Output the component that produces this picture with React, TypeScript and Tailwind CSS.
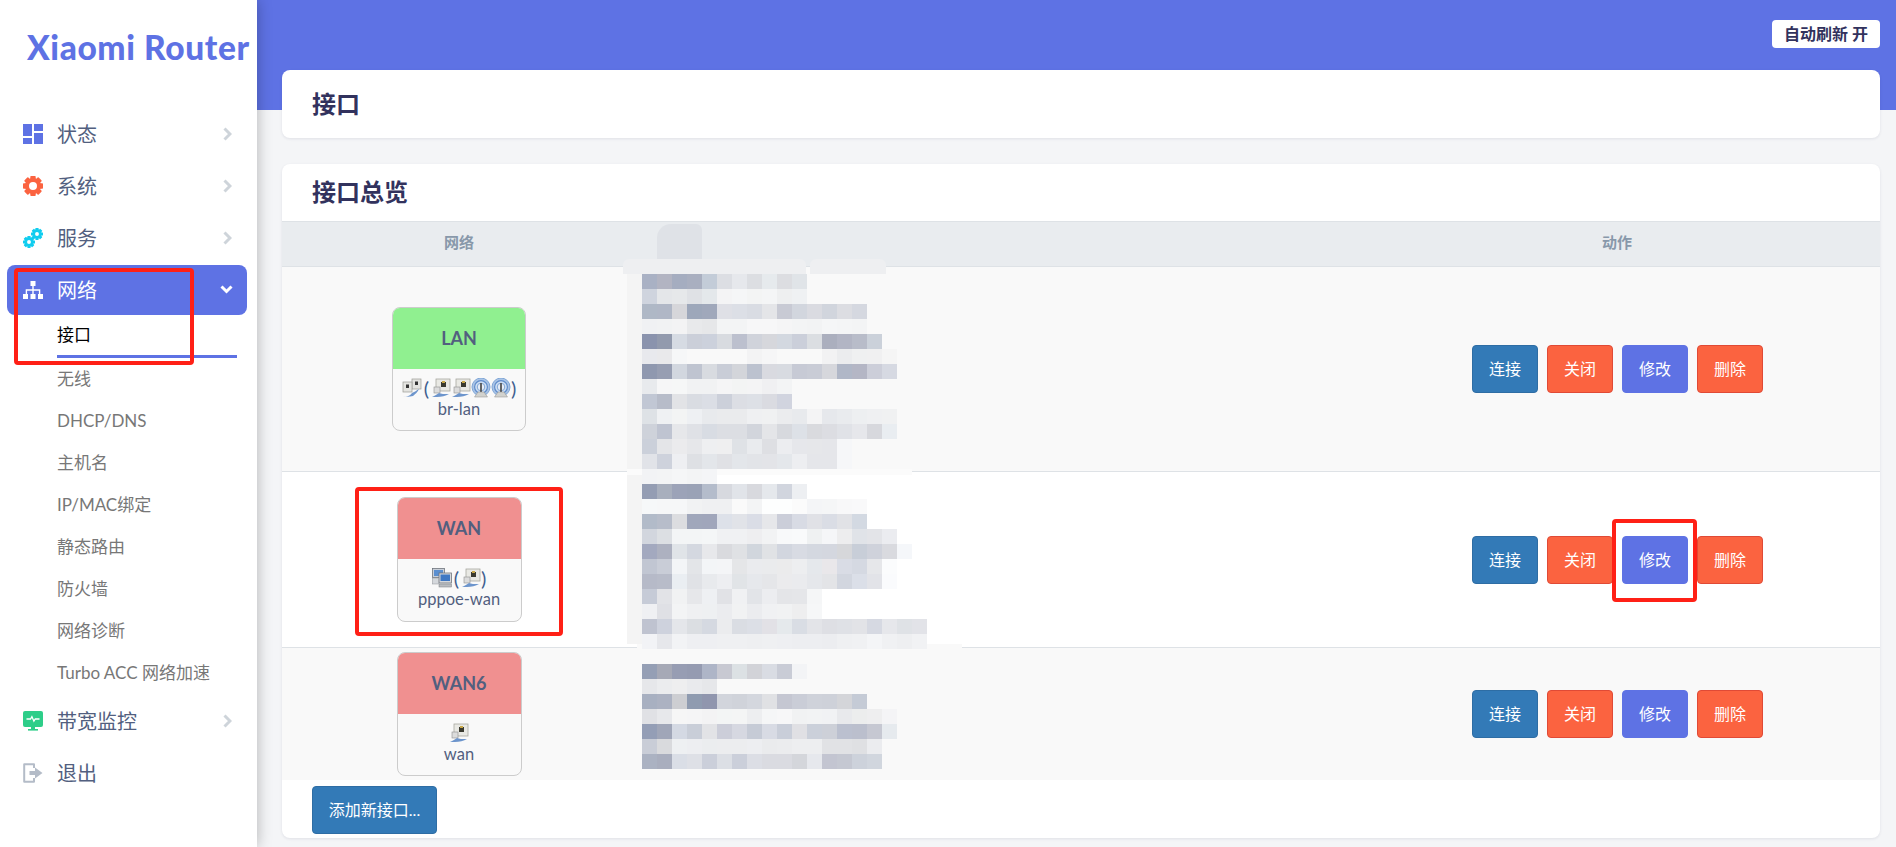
const FONT = "font-['Lato','Noto_Sans_CJK_SC',sans-serif]";

// pixelated block over the table, one row every 15px, from x=642 y=274
const MOSAIC: string[][] = [
  ['a9b1c4','b2b4c2','a5adc0','a9afc0','c3ccd8','dcdee3','e6e8ec','dcdee2','e6eaed','dcdde1','e0e4e8'],
  ['cfd4de','e4e6e9','e6e8ea','dfe1e5','e4e8eb','f4f4f5','f5f6f7','f3f4f4','f4f5f6','eeeff0','eff1f3'],
  ['afb8c6','b0b7c6','d6d6da','9da7ba','a0a8bb','dfe0e6','dcdfe6','d9dce3','e4e5e8','c8cad4','d2d6de','dadbe1','d1d5dd','dcdde2','d5d8e0'],
  ['f0f1f3','f1f2f3','f3f3f4','e8e9eb','e6e7e9','f3f4f5','f3f4f5','f7f7f8','f7f7f8','f5f5f6','f3f4f5','f2f3f4','f5f6f7','f4f5f6','f3f4f5'],
  ['8a93ad','929aad','d6dbe3','cbcfd9','ccd1dc','d8dbe0','bcc0ce','d0d3db','d6d7dc','d3d8e0','cbcfda','dbdee2','abafbe','b2b5c4','b8bcc9','cbd1da'],
  ['e8e9ed','e9e9eb','f6f7f8','f9f9f9','f9f9f9','f9f9f9','f9f9f9','f3f3f4','f6f6f7','f9f9f9','f9f9f9','f9f9f9','f2f2f3','ebecee','eff0f1','f0f0f1','f5f5f5'],
  ['8f98af','979eb2','d2d7df','bfc4d0','d8dbe0','c9cdd7','d3d5da','bcc2cf','d9dae0','d8dbe1','c7cad5','c9ccd6','d6d7dc','b0b7c7','b4b6c5','ccced9','d6d9e2'],
  ['e8eaed','f6f6f7','f6f7f7','f1f2f3','f1f2f3','f5f5f6','f3f4f4','f4f4f5','f0f0f2','f3f4f5'],
  ['c1c7d4','b7bcc9','e2e3e6','d9dce2','dbdee5','ccd0da','dcdee4','dde0e6','dadbe1','d1d4df'],
  ['dee2e6','eff1f3','f3f4f4','eef0f3','e8eaed','eaebed','eaebed','eff0f2','f0f1f2','ebecee','e8eaed','f4f4f5','e6e8ec','e9ebee','edeff1','eff0f2','f0f1f2'],
  ['ced2da','bfc4d1','e6e7ea','dfe1e6','d8dce3','dcdee3','dcdee3','d2d5dc','e4e5e8','d7d9de','dde1e7','d9dade','dcdde2','e0e2e7','e6e7eb','d7d8dd','e9edf1'],
  ['cbd0da','e4e5e8','ebebed','e6e7ea','eeeff1','efeff0','dfe2e6','e9ebee','dedfe3','ecedf0','e6e7eb','e6e7ea','e5e6ea','f6f7f9'],
  ['e1e3e8','ced2dc','eeeff2','dee0e4','e3e6ea','e0e1e5','e3e6ea','e2e4e8','e3e4e8','e4e7eb','edeef1','e5e6ea','e5e6ea','f6f7f9'],
  ['f2f3f5','f3f4f5','f5f6f7','f3f4f5','f4f5f7'],
  ['949db3','a8afbd','9ca3b8','9aa2b6','b4bccb','d7d9df','e1e4e9','d8d9de','e5e8ec','d1d5de','edeff2'],
  ['f6f8f9','f6f7f8','f6f7f8','f1f2f3','eff0f2','eff0f2','fafafa','f3f4f5','fdfefe','fdfefe','fbfbfb','f4f5f7','f5f6f7','f8f8f9','f9f9fa'],
  ['b2bbc9','b7bdca','dcdde0','a0a7bb','a0a6bb','dde1e9','e1e3e8','dadde6','e6e7ea','cbced9','d8dbe4','e0e1e6','dadde5','e1e2e6','d3d9e2'],
  ['d2d6de','dcdfe3','f3f5f6','f3f5f6','f4f6f7','f0f1f3','f0f1f3','eeeef0','f2f3f4','f8f9fa','f9fafb','eff1f2','f5f6f8','ededee','e0e3e8','e3e4e8','ebecf0'],
  ['a3a9bf','adb1c0','e0e4e8','d4d8e0','e7e8eb','d9dade','dfe1e4','d1d6dd','e0e2e5','d2d6df','d8dbe3','d4d8e0','d4d7df','d6d7da','c8ced8','cfd2db','d9dadf','f5f7fa'],
  ['c1c6d2','c9cdd7','f3f5f7','e3e5e8','f3f5f7','f4f5f7','e5e6e8','eaebee','eaebed','ebebec','edeef0','e5e8ec','e9e7ea','d9dce5','d5d9e2','e6e7ea','fbfcfd'],
  ['b6bac8','b8bcc9','eaeef2','e0e2e6','e8eaed','edeef1','e1e4e7','e6e8ec','e5e6e9','ebebed','eaebee','e5e7eb','e3e4e7','d2d6df','dbdfe8','e2e3e8','fafbfd'],
  ['c6cbd7','e2e3e7','f1f2f3','e6e7ea','eef0f3','e1e2e6','f0f1f3','e2e4e8','ecedf0','e4e5e8','e5e6e9','f5f6f7'],
  ['eff0f3','dfe0e5','f3f4f5','eff0f2','eef0f2','ebecef','f1f2f3','ebecef','f0f1f3','f1f2f3','eeeeef','f6f7f8'],
  ['bfc3d0','ced2dd','e4e6ea','dbdee2','d5d9e1','ebecee','dadde3','dcdfe6','e2e1e6','e5e9ec','d9dde4','e3e4e8','dedfe4','dfe1e6','e2e3e7','d6d9e2','e6e7eb','dfe2e6','e2e3e8'],
  ['f2f3f6','e6e7eb','f2f3f5','eeeff2','eeeff2','eff0f2','eff0f2','eeeff1','eff0f2','eeeff2','edeef1','edeef1','ecedf0','eff0f2','f0f1f3','f4f5f7','f0f1f3','eeeff1','f1f2f4'],
  [],
  ['959fb5','a6a9b6','979db3','959bb1','aeb5c7','c8c9d2','dce1e4','d2d3d8','d9dce3','c9ccd6','f3f4f6'],
  ['e6e7ea','ebecee','eeeeef','e9eaed','e6e7ea'],
  ['a8b0c1','acb2c2','cdced2','8f9bb0','9096ae','d2d5dc','d0d3da','d4d7de','e0e1e4','c5c7d2','cacdd7','cfd2da','ced1d9','d4d5d9','c5cbd6'],
  ['e0e1e5','e7e8eb','f6f6f6','f5f5f6','f3f3f4','f3f5f5','f4f5f5','edeef0','f5f6f7','f7f7f8','f1f2f3','f2f3f4','f1f2f4','e8e9ec','eceded','eeeeef','f4f4f6'],
  ['949eb6','a0a6b8','d4d9e3','c9ced8','e2e3e6','ccced9','d6d8e1','c6cbd6','d8dbe4','c9ced9','e0e0e4','cbd0da','cdd0d8','bbc0cf','bbbfcd','c6c8d2','e6eaee'],
  ['c9cdd7','d9dadd','eef0f2','edeef1','ebedef','ecedef','ecedef','edeef1','eaebed','ebecee','edeef0','edeef0','e1e2e5','e1e2e5','dfe0e3','ebecef'],
  ['abb2c2','a9aebe','dadee6','dee0e6','cbcfda','dcdfe5','cbcfda','dcdee5','dadbe1','dadbe1','d4d6db','e6e8ed','c3c5d1','c5c8d2','cdd2db','d1d6de'],
];

function Gear({ size, color, r = 6, stroke = 4 }: { size: number; color: string; r?: number; stroke?: number }) {
  const teeth = [0, 45, 90, 135, 180, 225, 270, 315];
  return (
    <svg width={size} height={size} viewBox="0 0 20 20">
      {teeth.map((a) => (
        <rect key={a} x="7.3" y="0" width="5.4" height="5" rx="0.8" fill={color} transform={`rotate(${a} 10 10)`} />
      ))}
      <circle cx="10" cy="10" r={r} fill="none" stroke={color} strokeWidth={stroke} />
    </svg>
  );
}

const DashIcon = () => (
  <svg width="20" height="20" viewBox="0 0 20 20" fill="#5e72e4">
    <rect x="0" y="0" width="9" height="12" />
    <rect x="11" y="0" width="9" height="7" />
    <rect x="0" y="14" width="9" height="6" />
    <rect x="11" y="9" width="9" height="11" />
  </svg>
);

const ServiceIcon = () => (
  <div className="relative w-5 h-5">
    <div className="absolute left-0 bottom-0"><Gear size={12} color="#11cdef" r={5.5} stroke={4.5} /></div>
    <div className="absolute right-0 top-0"><Gear size={12} color="#11cdef" r={5.5} stroke={4.5} /></div>
  </div>
);

const SitemapIcon = () => (
  <svg width="20" height="20" viewBox="0 0 20 20" fill="white">
    <rect x="7.5" y="1" width="5" height="5" />
    <rect x="0" y="14" width="5" height="5" />
    <rect x="7.5" y="14" width="5" height="5" />
    <rect x="15" y="14" width="5" height="5" />
    <path d="M9.3 6h1.4v3.3h6.6V14h-1.4v-3.3h-5.2V14H9.3v-3.3H4.1V14H2.7V9.3h6.6z" />
  </svg>
);

const MonitorIcon = () => (
  <svg width="20" height="20" viewBox="0 0 20 20">
    <rect x="0" y="0" width="20" height="16" rx="2" fill="#2dce89" />
    <rect x="8" y="16" width="4" height="2" fill="#2dce89" />
    <rect x="5" y="18" width="10" height="1.6" fill="#2dce89" />
    <path d="M3.5 8h4l1.4-2.4 2 4.6 1.4-2.2h4.2" fill="none" stroke="white" strokeWidth="1.3" />
  </svg>
);

const LogoutIcon = () => (
  <svg width="20" height="20" viewBox="0 0 20 20" fill="none">
    <path d="M11 5V1.2H1.2v17.6H11V15" stroke="#b4bcc8" strokeWidth="2" strokeLinejoin="round" />
    <path d="M6.5 8h5.5V4.5l7.5 5.5-7.5 5.5V12H6.5z" fill="#b4bcc8" />
  </svg>
);

const ChevronRight = () => (
  <svg width="9" height="14" viewBox="0 0 9 14" fill="none">
    <path d="M1.5 1.5 7 7l-5.5 5.5" stroke="#ced4da" strokeWidth="3" />
  </svg>
);

const ChevronDown = () => (
  <svg width="13" height="9" viewBox="0 0 13 9" fill="none">
    <path d="M1.5 1.5 6.5 6.5l5-5" stroke="white" strokeWidth="3" />
  </svg>
);

// the small device pictures in the interface cards
const EthIcon = () => (
  <svg width="20" height="20" viewBox="0 0 20 20">
    <rect x="5" y="1" width="14" height="12" fill="#e9e9e4" stroke="#a8a8a0" strokeWidth="0.8" />
    <rect x="10" y="4" width="5" height="5" fill="#3a3a30" />
    <rect x="11" y="3" width="3" height="2" fill="#c9a94a" />
    <rect x="3" y="9" width="6" height="6" fill="#dcdcdc" stroke="#8e8e8e" strokeWidth="0.6" />
    <path d="M1 19c3-1 5-3 7-4 2 1 5 1 10 1-3 2-8 3-12 3z" fill="#6d95cc" />
  </svg>
);

const WifiIcon = () => (
  <svg width="20" height="20" viewBox="0 0 20 20" fill="none">
    <circle cx="10" cy="9" r="9" fill="#a9c4e6" stroke="#7fa5d6" strokeWidth="1" />
    <circle cx="10" cy="9" r="6.4" fill="#cfdff2" stroke="#5f8ccb" strokeWidth="1.2" />
    <circle cx="10" cy="9" r="3.8" fill="#e6eef8" stroke="#7fa5d6" strokeWidth="1" />
    <path d="M10 5v9" stroke="#555" strokeWidth="1.8" />
    <path d="M3.5 19l3.5-5h6l3.5 5z" fill="#d2d2ce" stroke="#8e8e8e" strokeWidth="0.5" />
  </svg>
);

const BridgeIcon = () => (
  <svg width="20" height="20" viewBox="0 0 20 20">
    <rect x="10" y="1" width="9" height="10" fill="#e4e4e0" stroke="#9a9a94" strokeWidth="0.7" />
    <rect x="13" y="3.5" width="3" height="3.5" fill="#333" />
    <rect x="1" y="4" width="9" height="10" fill="#e4e4e0" stroke="#9a9a94" strokeWidth="0.7" />
    <rect x="4" y="6.5" width="3" height="3.5" fill="#333" />
    <path d="M1 18c4 1 7 0 9-3 2-1 4-2 7-4-1 3-4 5-6 7-4 1-7 1-10 0z" fill="#6d95cc" />
  </svg>
);

const PppoeIcon = () => (
  <svg width="20" height="20" viewBox="0 0 20 20">
    <rect x="0.5" y="0.5" width="12" height="9" fill="#c9cfd8" stroke="#70757d" strokeWidth="0.8" />
    <rect x="2" y="2" width="9" height="6" fill="#5b8fd0" />
    <rect x="7" y="5" width="12.5" height="10" fill="#d5d8dc" stroke="#70757d" strokeWidth="0.8" />
    <rect x="8.5" y="6.5" width="9.5" height="6.5" fill="#3f78c4" />
    <rect x="0.5" y="10" width="6" height="6" fill="#d5d8dc" stroke="#8e9298" strokeWidth="0.5" />
    <rect x="7" y="16" width="12.5" height="3" fill="#b9bcc0" stroke="#7b7f85" strokeWidth="0.5" />
  </svg>
);

function NavItem({ icon, label, chevron = true }: { icon: React.ReactNode; label: string; chevron?: boolean }) {
  return (
    <div className="flex items-center h-[50px] ml-[7px] mr-[10px] pl-[16px] pr-[15px] pb-[1px] text-[20px] text-[#525f7f]">
      <span className="w-[34px] shrink-0 flex items-center">{icon}</span>
      <span className="flex-1">{label}</span>
      {chevron && <ChevronRight />}
    </div>
  );
}

function SubItem({ label }: { label: string }) {
  return <div className="h-[42px] ml-[57px] mr-[20px] flex items-center text-[17px] text-[#777]">{label}</div>;
}

function Sidebar() {
  return (
    <aside className="w-[257px] shrink-0 bg-white shadow-[0_0_14px_rgba(0,0,0,0.28)] z-10 flex flex-col">
      <div className="h-[109px] pl-[27px] pt-[25px]">
        <div className="text-[33.5px] leading-[44px] font-black tracking-[0.6px] text-[#5e72e4] whitespace-nowrap">Xiaomi Router</div>
      </div>
      <div className="flex flex-col gap-[2px]">
        <NavItem icon={<DashIcon />} label="状态" />
        <NavItem icon={<Gear size={20} color="#fb6340" />} label="系统" />
        <NavItem icon={<ServiceIcon />} label="服务" />
        <div className="flex items-center h-[50px] ml-[7px] mr-[10px] pl-[16px] pr-[14px] pb-[1px] text-[20px] text-white bg-[#5e72e4] rounded-[8px]">
          <span className="w-[34px] shrink-0 flex items-center"><SitemapIcon /></span>
          <span className="flex-1">网络</span>
          <ChevronDown />
        </div>
      </div>
      <div className="h-[43px] ml-[57px] mr-[20px] flex items-center text-[17px] text-black border-b-[3px] border-[#5e72e4]">接口</div>
      <SubItem label="无线" />
      <SubItem label="DHCP/DNS" />
      <SubItem label="主机名" />
      <SubItem label="IP/MAC绑定" />
      <SubItem label="静态路由" />
      <SubItem label="防火墙" />
      <SubItem label="网络诊断" />
      <SubItem label="Turbo ACC 网络加速" />
      <div className="flex flex-col gap-[2px] mt-[2px]">
        <NavItem icon={<MonitorIcon />} label="带宽监控" />
        <NavItem icon={<LogoutIcon />} label="退出" chevron={false} />
      </div>
    </aside>
  );
}

function IfaceCard({ name, device, color, w, h, icons }: { name: string; device: string; color: string; w: string; h: string; icons: React.ReactNode }) {
  return (
    <div className={`${w} ${h} rounded-[8px] border border-[#ccc] bg-[#f9f9f9] overflow-hidden flex flex-col`}>
      <div className={`${color} h-[61px] shrink-0 flex items-center justify-center text-[18px] font-bold text-[#525f7f]`}>{name}</div>
      <div className="flex flex-col items-center pt-[9px]">
        <div className="flex items-center justify-center h-[20px] text-[20px] text-[#3f5f90]">{icons}</div>
        <div className="text-[16.5px] leading-[22px] text-[#525f7f]">{device}</div>
      </div>
    </div>
  );
}

function ActionButtons() {
  const base = 'w-[66px] h-[48px] rounded-[4px] border text-[16px] text-white flex items-center justify-center';
  return (
    <div className="flex gap-[9px]">
      <button className={`${base} bg-[#337ab7] border-[#2e6da4]`}>连接</button>
      <button className={`${base} bg-[#fb6340] border-[#e04a36]`}>关闭</button>
      <button className={`${base} bg-[#5e72e4] border-[#5e72e4]`}>修改</button>
      <button className={`${base} bg-[#fb6340] border-[#e04a36]`}>删除</button>
    </div>
  );
}

function Row({ card, className }: { card: React.ReactNode; className: string }) {
  return (
    <div className={`flex items-center ${className}`}>
      <div className="w-[354px] flex justify-center">{card}</div>
      <div className="flex-1" />
      <div className="w-[526px] pl-[118px]"><ActionButtons /></div>
    </div>
  );
}

function Mosaic() {
  return (
    <div className="absolute left-[360px] top-[110px] flex flex-col">
      {MOSAIC.map((row, i) => (
        <div key={i} className="flex h-[15px]">
          {row.map((c, j) => (
            <div key={j} className="w-[15px] h-[15px]" style={{ backgroundColor: `#${c}` }} />
          ))}
        </div>
      ))}
    </div>
  );
}

export default function App() {
  return (
    <div className={`relative flex h-[847px] w-[1896px] overflow-hidden bg-[#f4f5f7] ${FONT}`}>
      <Sidebar />
      <main className="flex-1 min-w-0 flex flex-col">
        <div className="h-[110px] shrink-0 bg-[#5e72e4] flex justify-end items-start pt-[20px] pr-[16px]">
          <div className="w-[108px] h-[28px] bg-white rounded-[4px] flex items-center justify-center text-[16px] font-bold text-[#32325d]">自动刷新 开</div>
        </div>
        <div className="-mt-[40px] pl-[25px] pr-[16px] flex flex-col gap-[26px]">
          <div className="h-[68px] bg-white rounded-[8px] shadow-[0_1px_3px_rgba(50,50,93,0.1)] flex items-center pl-[30px] text-[24px] font-bold text-[#32325d]">接口</div>
          <div className="relative h-[674px] bg-white rounded-[8px] shadow-[0_1px_3px_rgba(50,50,93,0.1)] overflow-hidden">
            <div className="h-[57px] flex items-center pl-[30px] pb-[2px] text-[24px] font-bold text-[#32325d]">接口总览</div>
            <div className="flex items-center h-[46px] pb-[3px] bg-[#e9ecef] border-y border-[#dee2e6] text-[15px] font-bold text-[#8898aa]">
              <div className="w-[354px] text-center">网络</div>
              <div className="flex-1" />
              <div className="w-[526px] text-center">动作</div>
            </div>
            <Row
              className="h-[205px] bg-[#f9f9f9] border-b border-[#dee2e6]"
              card={
                <IfaceCard
                  name="LAN"
                  device="br-lan"
                  color="bg-[#90f090]"
                  w="w-[134px]"
                  h="h-[124px]"
                  icons={<><BridgeIcon /><span className="mx-[2px]">(</span><EthIcon /><EthIcon /><WifiIcon /><WifiIcon /><span>)</span></>}
                />
              }
            />
            <Row
              className="h-[176px] bg-white border-b border-[#dee2e6]"
              card={
                <IfaceCard
                  name="WAN"
                  device="pppoe-wan"
                  color="bg-[#f09090]"
                  w="w-[125px]"
                  h="h-[125px]"
                  icons={<><PppoeIcon /><span className="mx-[2px]">(</span><EthIcon /><span>)</span></>}
                />
              }
            />
            <Row
              className="h-[132px] bg-[#f9f9f9]"
              card={
                <IfaceCard name="WAN6" device="wan" color="bg-[#f09090]" w="w-[125px]" h="h-[124px]" icons={<EthIcon />} />
              }
            />
            <div className="pt-[6px] pl-[30px]">
              <button className="w-[125px] h-[48px] rounded-[4px] border border-[#2e6da4] bg-[#337ab7] text-[16px] text-white">添加新接口...</button>
            </div>
            {/* pale smudges left around the pixelated block */}
            <div className="absolute left-[375px] top-[60px] w-[45px] h-[35px] rounded-tl-[14px] rounded-tr-[6px] bg-[#dfe2e7]" />
            <div className="absolute left-[341px] top-[95px] w-[183px] h-[15px] rounded-t-[6px] bg-[#eeeff1]" />
            <div className="absolute left-[528px] top-[95px] w-[76px] h-[15px] rounded-t-[6px] bg-[#eeeff1]" />
            <div className="absolute left-[345px] top-[110px] w-[15px] h-[370px] bg-[#f4f4f4]" />
            <div className="absolute left-[345px] top-[305px] w-[285px] h-[6px] bg-[#fbfbfb]" />
            <div className="absolute left-[355px] top-[480px] w-[325px] h-[8px] bg-[#f9f9f9]" />
            <Mosaic />
          </div>
        </div>
      </main>
      {/* red annotation boxes */}
      <div className="absolute left-[14px] top-[268px] w-[180px] h-[97px] border-4 border-[#ff2016] rounded-[4px] z-20" />
      <div className="absolute left-[355px] top-[487px] w-[208px] h-[149px] border-4 border-[#ff2016] rounded-[4px] z-20" />
      <div className="absolute left-[1612px] top-[519px] w-[85px] h-[83px] border-4 border-[#ff2016] rounded-[4px] z-20" />
    </div>
  );
}
